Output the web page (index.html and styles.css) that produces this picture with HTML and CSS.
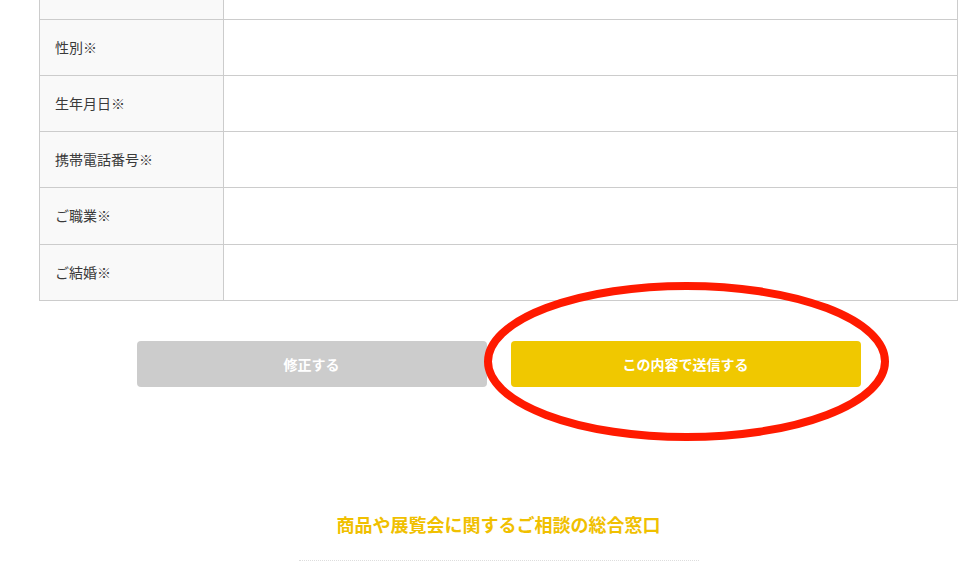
FILE: index.html
```html
<!DOCTYPE html>
<html lang="ja">
<head>
  <meta charset="UTF-8" />
  <meta name="viewport" content="width=device-width, initial-scale=1" />
  <title>入力内容の確認</title>
  <link rel="stylesheet" href="styles.css">
</head>
<body>

  <div class="container">
    <table class="confirm-table">
      <tr><th></th><td></td></tr>
      <tr><th>性別※</th><td></td></tr>
      <tr><th>生年月日※</th><td></td></tr>
      <tr><th>携帯電話番号※</th><td></td></tr>
      <tr class="tall"><th>ご職業※</th><td></td></tr>
      <tr><th>ご結婚※</th><td></td></tr>
    </table>

    <div class="actions">
      <button class="btn btn-back" type="button">修正する</button>
      <button class="btn btn-send" type="submit">この内容で送信する</button>
      <!-- red marker drawn over the send button -->
      <svg class="marker" width="414" height="168" viewBox="0 0 414 168">
        <ellipse cx="206.5" cy="83.5" rx="198.5" ry="75.5" fill="none" stroke="#ff1a00" stroke-width="8" />
      </svg>
    </div>

    <h2 class="contact-title">商品や展覧会に関するご相談の総合窓口</h2>
    <div class="contact-line"></div>
  </div>

</body>
</html>
```

FILE: styles.css
```css
* {
  margin: 0;
  padding: 0;
  box-sizing: border-box;
}

body {
  background: #fff;
  color: #333;
  font-family: "Noto Sans CJK JP", "Noto Sans", sans-serif;
  overflow: hidden;
}

.container {
  padding: 0 4px 0 39px;
}

.confirm-table {
  width: 100%;
  border-collapse: collapse;
  margin-top: -37px;
}

.confirm-table th,
.confirm-table td {
  height: 56px;
  border: 1px solid #cccccc;
  font-size: 14px;
  font-weight: normal;
  line-height: 20px;
  text-align: left;
  vertical-align: middle;
}

.confirm-table .tall th,
.confirm-table .tall td {
  height: 57px;
}

.confirm-table th {
  width: 184px;
  padding: 0 0 2px 15px;
  background: #f9f9f9;
  color: #3a3a3a;
}

.actions {
  position: relative;
  display: flex;
  justify-content: center;
  gap: 24px;
  margin-top: 40px;
}

.btn {
  width: 350px;
  height: 46px;
  border: none;
  border-radius: 4px;
  color: #fff;
  font-family: inherit;
  font-size: 14px;
  font-weight: bold;
}

.btn-back {
  background: #cccccc;
}

.btn-send {
  background: #f0c800;
}

.marker {
  position: absolute;
  left: 441px;
  top: -63px;
}

.contact-title {
  margin-top: 124px;
  text-align: center;
  color: #f0c000;
  font-size: 18px;
  font-weight: bold;
  line-height: 27px;
}

.contact-line {
  width: 400px;
  margin: 22px auto 0;
  border-top: 1px dotted #dddddd;
}
```
